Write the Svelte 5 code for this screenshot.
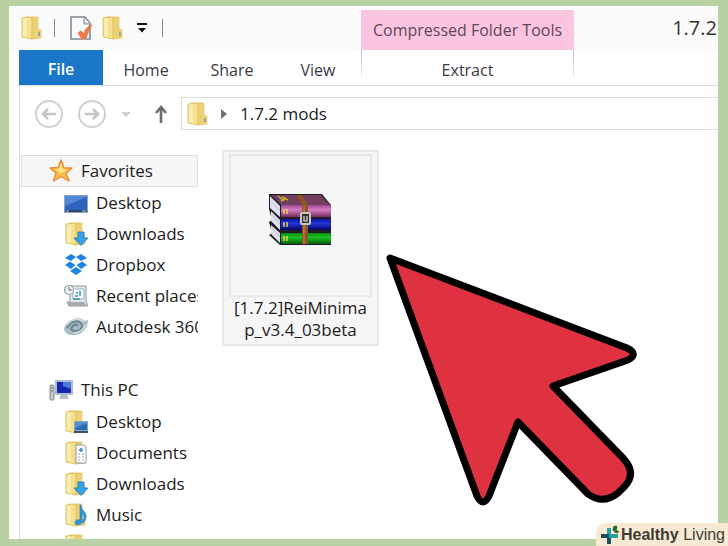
<script lang="ts">
	type Place = { name: string; icon: string };

	const tabs: string[] = ['Home', 'Share', 'View'];

	const groups: { name: string; icon: string; selected: boolean; places: Place[] }[] = [
		{
			name: 'Favorites',
			icon: 'star',
			selected: true,
			places: [
				{ name: 'Desktop', icon: 'screen' },
				{ name: 'Downloads', icon: 'downloads' },
				{ name: 'Dropbox', icon: 'dropbox' },
				{ name: 'Recent places', icon: 'recent' },
				{ name: 'Autodesk 360', icon: 'autodesk' }
			]
		},
		{
			name: 'This PC',
			icon: 'pc',
			selected: false,
			places: [
				{ name: 'Desktop', icon: 'desktop' },
				{ name: 'Documents', icon: 'documents' },
				{ name: 'Downloads', icon: 'downloads' },
				{ name: 'Music', icon: 'music' },
				{ name: 'Pictures', icon: 'folder' }
			]
		}
	];

	let path: string = $state('1.7.2 mods');
</script>

{#snippet folder()}
	<path d="M5 1 H18 V13 L21 14 V22 L12 23 L5 20 Z" fill="#e9cb62" stroke="#d9b851" stroke-width=".6" />
	<path d="M12 3 L18 1 V13 L21 14 V22 L12 23 Z" fill="#ecd176" />
	<path d="M2 2 L10 1 L12 3 V23 L2 21 Z" fill="#f4e08d" stroke="#dcbc55" stroke-width=".8" />
	<path d="M3 3 L7 2 V21 L3 20 Z" fill="#fbf0bd" opacity=".8" />
	<path d="M19 16 V20" stroke="#8c9a9b" stroke-width="1.500" />
{/snippet}

{#snippet icon(name: string)}
	<svg class="icon" viewBox="0 0 24 24" aria-hidden="true">
		{#if name === 'star'}
			<path d="M12 1 L15 9 L23 9 L17 14.500 L20 22 L12 17.500 L4.500 22 L7 14 L1 9 L9 8.500 Z" fill="#fdc04a" stroke="#ea8a32" stroke-width="1.400" stroke-linejoin="round" />
			<path d="M12 4 L14 10 L19 10.500 L12 14 L6 10.500 L10 10 Z" fill="#ffe48f" />
		{:else if name === 'screen'}
			<rect x="0" y="4" width="24" height="18" fill="#8ba3bd" />
			<rect x="1" y="5" width="22" height="14" fill="#2f62bd" />
			<path d="M1 15 L23 6 V5 H1 Z" fill="#5286d8" />
			<path d="M1 19 H23 V21 H1 Z" fill="#2f4566" />
			<path d="M2 20 H5 M18 20 H22" stroke="#b9cde0" />
		{:else if name === 'dropbox'}
			<path d="M7 1 L12 4 L7 8 L1 5 Z M17 1 L23 5 L17 8 L12 4 Z M6 8.500 L11.500 12 L7 16 L1 12 Z M18 8.500 L23 12 L17 16 L12.500 12 Z M12 14 L18 18 L12 22 L6 18 Z" fill="#1b84e4" />
			<path d="M12 5.500 L17 8.700 L12 12 L7 8.700 Z" fill="#f5faff" />
		{:else if name === 'recent'}
			<path d="M6 2 H22 V17 L24 22 H5 L3 18 H6 Z" fill="#e4e8ea" stroke="#8e989d" />
			<path d="M4 18 H20 L23 22 H5 Z" fill="#a4abad" />
			<path d="M11 5 H20 V15 H9 V9" fill="#f4fafb" stroke="#8fb7c3" />
			<path d="M12 9 H14 M16 7 V12 M11 12 H14 M9 15 H16" stroke="#3d94ab" stroke-width="1.500" />
			<circle cx="5" cy="6" r="4.500" fill="#eef1f2" stroke="#9aa3a8" stroke-width="1.200" />
			<path d="M5 3 V6 H8" fill="none" stroke="#67757c" />
		{:else if name === 'autodesk'}
			<path d="M0 14 C2 4 15 0 21 6 L24 5 C24 14 17 21 8 20 C4 20 1 18 0 14 Z" fill="#a9bbc4" />
			<path d="M3 13 C7 4 18 5 18 11 C18 16 10 18 7 14 C9 9 13 9 14 11" fill="none" stroke="#6c8894" stroke-width="2.200" />
			<path d="M3 10 C8 3 15 3 20 7" fill="none" stroke="#d2dde1" stroke-width="1.600" />
			<path d="M9 18 C16 18 20 14 21 10" fill="none" stroke="#d9e4e8" stroke-width="1.500" />
		{:else if name === 'pc'}
			<rect x="1" y="7" width="4" height="15" rx="1" fill="#c2cbc9" stroke="#7f8c8a" />
			<path d="M2 10 H4 M2 13 H4" stroke="#657270" />
			<rect x="6" y="2" width="18" height="15" rx="1" fill="#aebdcc" />
			<rect x="8" y="4" width="14" height="11" fill="#1426b4" />
			<path d="M14 4 H22 V11 L14 8 Z" fill="#4d79dc" />
			<path d="M12 17 H18 L20 21 H10 Z" fill="#b5bdc2" />
		{:else}
			{@render folder()}
			{#if name === 'desktop'}
				<rect x="10" y="11" width="14" height="12" fill="#8ca9bc" />
				<rect x="11" y="12" width="12" height="8" fill="#2c6cb4" />
				<path d="M11 18 L23 13 V12 H11 Z" fill="#568fd0" />
				<path d="M10 21 H24 V23 H10 Z" fill="#38536a" />
			{:else if name === 'documents'}
				<path d="M12 4 H20 L22 6 V22 H12 Z" fill="#fff" stroke="#8d9db0" />
				<path d="M14 13 H16 M14 16 H16 M14 19 H16 M18 13 H20 M18 16 H20 M18 19 H20" stroke="#8fa6bd" />
				<path d="M15 9 H19 M17 7 V11" stroke="#4c9be0" stroke-width="2" />
			{:else if name === 'downloads'}
				<path d="M14 10 H20 V16 H24 L17 23.500 L10 16 H14 Z" fill="#35a3e6" stroke="#1c76bd" stroke-width=".8" />
			{:else if name === 'music'}
				<path d="M17 2 C17 8 23 9 22 14 C22 17 20 19 19 20 C21 14 20 12 18 11 V19 C18 22 11 23 11 20 C11 17 14 16 16 17 V2 Z" fill="#2e96db" stroke="#1b78b9" stroke-width=".6" />
			{/if}
		{/if}
	</svg>
{/snippet}

<div class="desktop">
	<main class="window">
		<header class="titlebar">
			<div class="quick">
				<svg class="icon" viewBox="0 0 24 24" aria-hidden="true">{@render folder()}</svg>
				<span class="rule"></span>
				<button aria-label="Properties">
					<svg class="icon" viewBox="0 0 24 24" aria-hidden="true">
						<path d="M2 1 H16 L21 7 V23 H2 Z" fill="#fafbfd" stroke="#7f8790" stroke-width="1.500" />
						<path d="M15 1 V8 H21" fill="#e4e8ed" stroke="#7f8790" />
						<path d="M9 17 L12 15 L15 18 C16 13 19 10 23 9 C20 12 19 18 17 22 L13 23 Z" fill="#ef7848" stroke="#ef7848" stroke-linejoin="round" />
					</svg>
				</button>
				<button aria-label="New folder"><svg class="icon" viewBox="0 0 24 24" aria-hidden="true">{@render folder()}</svg></button>
				<button aria-label="Customize toolbar">
					<svg class="caret" viewBox="0 0 12 12" aria-hidden="true">
						<path d="M1 2 H11" stroke="#111" stroke-width="2" />
						<path d="M2 6 H10 L6 10.500 Z" fill="#111" />
					</svg>
				</button>
				<span class="rule"></span>
			</div>
			<div class="context">Compressed Folder Tools</div>
			<h1>1.7.2</h1>
		</header>

		<nav class="ribbon">
			<button class="file">File</button>
			{#each tabs as tab}
				<button class="tab">{tab}</button>
			{/each}
			<button class="extract">Extract</button>
		</nav>

		<div class="toolbar">
			<button aria-label="Back">
				<svg class="round" viewBox="0 0 30 30" aria-hidden="true">
					<circle cx="15" cy="15" r="13" fill="none" stroke="#d2d2d2" stroke-width="2" />
					<path d="M22 15 H9 M14 10 L9 15 L14 20" fill="none" stroke="#c4c4c4" stroke-width="2.600" />
				</svg>
			</button>
			<button aria-label="Forward">
				<svg class="round" viewBox="0 0 30 30" aria-hidden="true">
					<circle cx="15" cy="15" r="13" fill="none" stroke="#d2d2d2" stroke-width="2" />
					<path d="M8 15 H21 M16 10 L21 15 L16 20" fill="none" stroke="#c4c4c4" stroke-width="2.600" />
				</svg>
			</button>
			<button aria-label="Recent locations">
				<svg class="caret" viewBox="0 0 12 12" aria-hidden="true"><path d="M1 4 H11 L6 9 Z" fill="#d0d0d0" /></svg>
			</button>
			<button class="up" aria-label="Up">
				<svg viewBox="0 0 14 20" aria-hidden="true"><path d="M7 19 V3 M2 9 L7 3 L12 9" fill="none" stroke="#6c6c6c" stroke-width="2.600" /></svg>
			</button>
			<label class="address">
				<svg class="icon" viewBox="0 0 24 24" aria-hidden="true">{@render folder()}</svg>
				<svg class="chevron" viewBox="0 0 8 12" aria-hidden="true"><path d="M1 1 L7 6 L1 11 Z" fill="#707070" /></svg>
				<input aria-label="Address" bind:value={path} />
			</label>
		</div>

		<div class="body">
			<aside class="sidebar">
				{#each groups as group}
					<section>
						<a href="#top" class="heading" class:selected={group.selected}>{@render icon(group.icon)}{group.name}</a>
						{#each group.places as place}
							<a href="#top" class="place">{@render icon(place.icon)}{place.name}</a>
						{/each}
					</section>
				{/each}
			</aside>

			<div class="files">
				<button class="item">
					<span class="thumb">
						<svg viewBox="0 0 64 54" aria-hidden="true">
							<defs>
								<linearGradient id="purple" x2="0" y2="1"><stop stop-color="#a0488c" /><stop offset=".4" stop-color="#d67bc3" /><stop offset="1" stop-color="#74305f" /></linearGradient>
								<linearGradient id="blue" x2="0" y2="1"><stop stop-color="#0c13a2" /><stop offset=".4" stop-color="#2334d8" /><stop offset="1" stop-color="#050862" /></linearGradient>
								<linearGradient id="green" x2="0" y2="1"><stop stop-color="#088d11" /><stop offset=".4" stop-color="#1cc226" /><stop offset="1" stop-color="#055b0a" /></linearGradient>
							</defs>
							<path d="M1 1 L54 1 L63 12 V52 H12 L1 42 L4 40 L1 29 L4 27 L1 16 Z" fill="#211b28" />
							<path d="M2 3 L12 13 V24 L2 15 Z M3 18 L12 27 V37 L3 28 Z M3 32 L12 40 V50 L3 41 Z" fill="#dfdfed" />
							<path d="M4 9 L12 18 M4 22 L12 31 M4 35 L12 44" stroke="#b6b9cc" />
							<path d="M3 2 L53 2 L62 12 H13 Z" fill="#723e60" />
							<path d="M10 3 L16 8 M14 4 L20 7 M13 8 L18 5" stroke="#c5b42a" stroke-width="1.500" />
							<rect x="13" y="12" width="50" height="12" rx="1" fill="url(#purple)" />
							<rect x="13" y="26" width="50" height="11" rx="1" fill="url(#blue)" />
							<rect x="13" y="40" width="50" height="11" rx="1" fill="url(#green)" />
							<path d="M16 16 V21 M19 16 V21 M16 29 V34 M19 29 V34 M16 43 V48 M19 43 V48" stroke="#e7cf55" stroke-width="1.500" />
							<path d="M28 2 H34 L40 12 V51 H34 V12 Z" fill="#8c5427" />
							<path d="M36 13 V51" stroke="#bd7b3c" stroke-width="1.500" />
							<rect x="33" y="20" width="9" height="11" rx="1" fill="#3a332c" stroke="#c6c6c1" stroke-width="2" />
							<path d="M36 23 V28 H39 V23" fill="none" stroke="#ddd" stroke-width="1.200" />
						</svg>
					</span>
					<span class="filename">[1.7.2]ReiMinimap_v3.4_03beta</span>
				</button>
			</div>
		</div>
	</main>

	<svg class="pointer" viewBox="0 0 254 256" aria-hidden="true">
		<path d="M6 6 L243 96 Q255 102 244 108 L169 134 L239 206 Q253 221 241 234 L234 241 Q219 253 204 242 L134 170 L105 244 Q99 256 93 244 Z" />
	</svg>

	<div class="brand">
		<svg viewBox="0 0 20 22" aria-hidden="true">
			<path d="M9 4 V20" stroke="#26a3a6" stroke-width="4" />
			<path d="M1 12 H9" stroke="#164c5c" stroke-width="4" />
			<path d="M9 12 H18" stroke="#25a2a6" stroke-width="4" />
			<path d="M9 14 V20" stroke="#175563" stroke-width="4" />
			<path d="M13 7 C12 3 14 1 17 2 C18 5 16 7 13 7 Z M14 8 C16 5 18 6 19 8 C17 10 15 9 14 8 Z" fill="#2e6b2f" />
		</svg>
		<span><b>Healthy</b> Living</span>
	</div>
</div>

<style>
	:global(body) {
		margin: 0;
	}

	.desktop {
		position: relative;
		display: flex;
		box-sizing: border-box;
		height: 100vh;
		padding: 6px 10px 7px 9px;
		overflow: hidden;
		background: #b9d1a3;
		color: #1c1c1c;
		font: 17px/22px 'Open Sans', 'Noto Sans', sans-serif;
	}

	button {
		display: flex;
		align-items: center;
		justify-content: center;
		padding: 0;
		border: 0;
		background: none;
		color: inherit;
		font: inherit;
	}

	.window {
		display: flex;
		flex: 1;
		flex-direction: column;
		min-width: 0;
		background: #fff;
	}

	.icon {
		flex: none;
		width: 24px;
		height: 24px;
	}

	.caret {
		width: 12px;
		height: 12px;
	}

	.titlebar {
		display: flex;
		flex: none;
		height: 44px;
		background: #fbfbfc;
	}

	.quick {
		display: flex;
		align-items: center;
		box-sizing: border-box;
		width: 352px;
		padding-left: 11px;
	}

	.quick button {
		margin-right: 8px;
	}

	.quick button:last-of-type {
		margin: 0 14px 0 3px;
	}

	.rule {
		width: 1px;
		height: 18px;
		background: #8b8b8b;
	}

	.icon + .rule {
		margin: 0 14px 0 10px;
	}

	.context {
		display: flex;
		align-items: center;
		justify-content: center;
		width: 213px;
		margin-top: 4px;
		background: #fcc5df;
		color: #604459;
		font-size: 16px;
	}

	h1 {
		margin: 0 1px 0 auto;
		color: #333;
		font-size: 20px;
		font-weight: 400;
		line-height: 44px;
	}

	.ribbon {
		display: flex;
		flex: none;
		height: 35px;
		margin-left: 10px;
		border-bottom: 1px solid #dcdcdc;
		color: #3a3a44;
		font-size: 16px;
	}

	.file {
		width: 84px;
		padding-top: 2px;
		background: #1976c9;
		color: #fff;
		font-weight: 600;
	}

	.tab {
		width: 86px;
		padding-top: 4px;
	}

	.extract {
		width: 213px;
		height: 27px;
		padding-top: 12px;
		border: 1px solid;
		border-width: 0 1px;
		border-image: linear-gradient(#bbb, #eee) 1;
	}

	.toolbar {
		display: flex;
		flex: none;
		align-items: center;
		height: 55px;
		margin-left: 10px;
		padding-left: 14px;
		border-left: 1px solid #dcdcdc;
	}

	.round {
		width: 30px;
		height: 30px;
		margin-right: 13px;
	}

	.up {
		margin: 0 13px 0 22px;
	}

	.up svg {
		width: 14px;
		height: 20px;
	}

	.address {
		display: flex;
		flex: 1;
		align-items: center;
		height: 31px;
		padding-left: 4px;
		border: 1px solid #dcdcdc;
		border-right: 0;
	}

	.chevron {
		width: 8px;
		height: 12px;
		margin: 0 12px 0 10px;
	}

	input {
		flex: 1;
		min-width: 0;
		padding: 0;
		border: 0;
		outline: 0;
		background: none;
		color: inherit;
		font: inherit;
	}

	.body {
		display: flex;
		flex: 1;
		min-height: 0;
		margin-left: 10px;
		overflow: hidden;
		border-left: 1px solid #dcdcdc;
	}

	.sidebar {
		display: flex;
		flex: none;
		flex-direction: column;
		gap: 32px;
		box-sizing: border-box;
		width: 178px;
		padding: 14px 0 0 1px;
		overflow: hidden;
	}

	.sidebar a {
		display: flex;
		align-items: center;
		gap: 8px;
		box-sizing: border-box;
		color: inherit;
		text-decoration: none;
		white-space: nowrap;
	}

	.sidebar .heading {
		height: 32px;
		padding-left: 27px;
		border: 1px solid transparent;
	}

	.sidebar .selected {
		border-color: #dedede;
		background: #f6f6f6;
	}

	.place {
		height: 31px;
		padding-left: 43px;
	}

	.files {
		flex: 1;
		padding: 9px 24px;
	}

	.item {
		flex-direction: column;
		box-sizing: border-box;
		width: 157px;
		padding: 2px 6px 3px;
		border: 2px solid #e8e8e8;
		background: #f6f6f6;
	}

	.thumb {
		display: flex;
		align-items: center;
		justify-content: center;
		box-sizing: border-box;
		width: 143px;
		height: 143px;
		padding: 0 2px 12px 0;
		border: 2px solid #e8e8e8;
	}

	.thumb svg {
		width: 64px;
		height: 54px;
	}

	.filename {
		width: 136px;
		overflow-wrap: anywhere;
		text-align: center;
	}

	/* The pointer and the brand tag lie over the window */
	.pointer {
		position: absolute;
		top: 252px;
		left: 384px;
		width: 254px;
		height: 256px;
	}

	.pointer path {
		fill: #de3240;
		stroke: #000;
		stroke-width: 7;
		stroke-linejoin: round;
	}

	.brand {
		position: absolute;
		right: 0;
		bottom: 0;
		display: flex;
		align-items: center;
		gap: 1px;
		padding: 0 3px 0 4px;
		border-top-left-radius: 10px;
		background: #f8ead2;
		color: #3c3c34;
		font: 16px/23px 'Liberation Sans', Arial, sans-serif;
	}

	.brand svg {
		width: 20px;
		height: 22px;
	}
</style>
